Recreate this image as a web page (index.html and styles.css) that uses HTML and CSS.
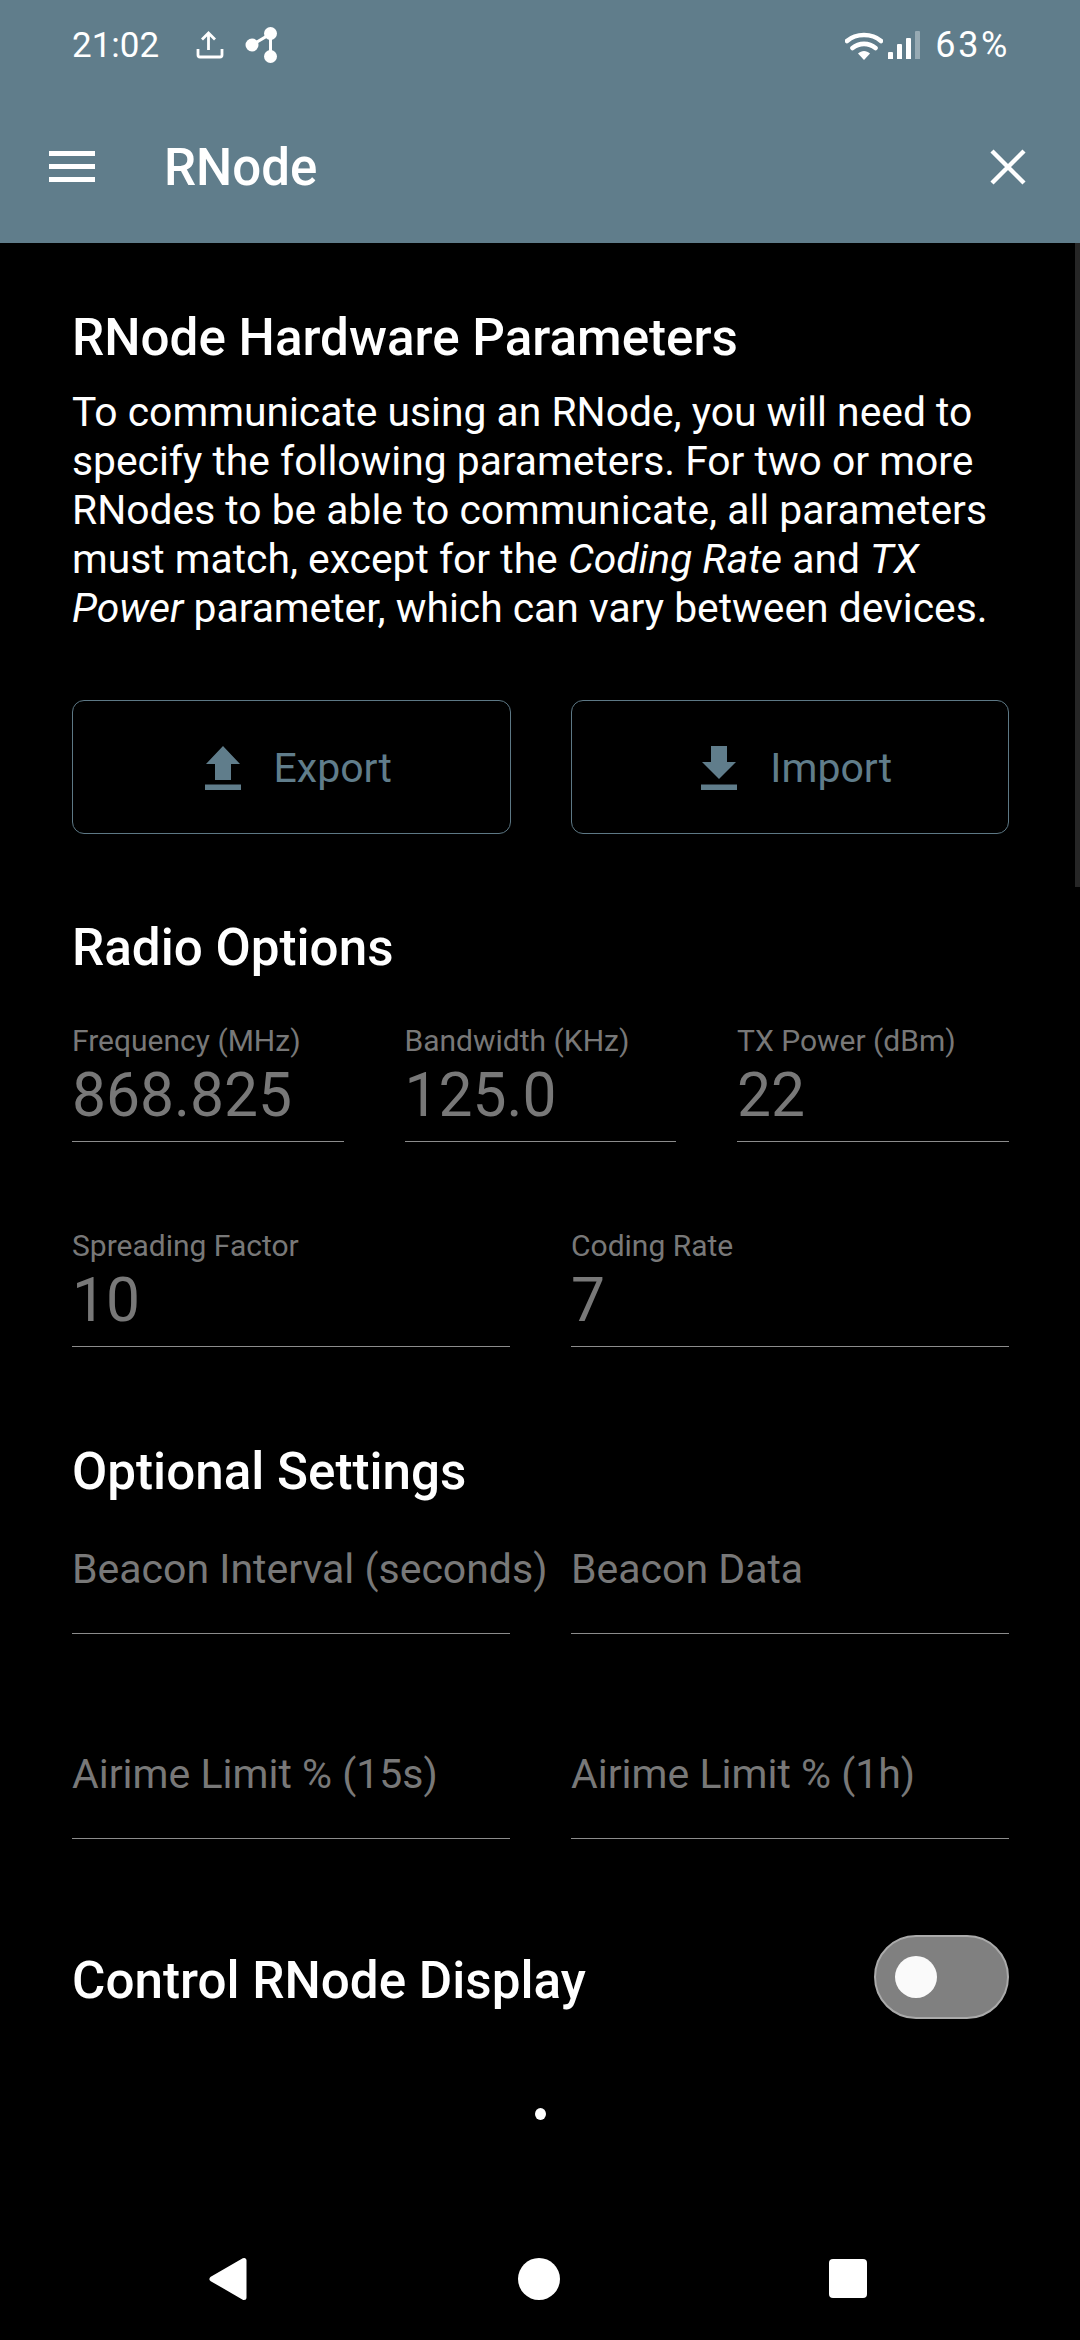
FILE: index.html
```html
<!DOCTYPE html>
<html>
  <head>
    <meta name="viewport" content="width=device-width,initial-scale=1.0">
    <title>RNode</title>
    <link rel="stylesheet" href="styles.css">
  </head>
  <body>
    <header class="app-header">
      <div class="status-bar">
        <span class="clock">21:02</span>
        <svg class="ic-upload" viewBox="0 0 28 28" width="28" height="28"><path d="M12.500 19V3M6 8.500 12.500 2 19 8.500M2 18v6a2 2 0 0 0 2 2h20a2 2 0 0 0 2-2v-6" fill="none" stroke="#fff" stroke-width="2.800"/></svg>
        <svg class="ic-mesh" viewBox="0 0 32 36" width="32" height="36"><path d="M7 18 25.500 7v23" fill="none" stroke="#fff" stroke-width="3"/><circle cx="7" cy="18" r="6.500" fill="#fff"/><circle cx="25.500" cy="6.500" r="6.500" fill="#fff"/><circle cx="25.500" cy="29.500" r="6.500" fill="#fff"/></svg>
        <span class="status-right">
          <svg class="ic-wifi" viewBox="0 0 38 29" width="38" height="29"><path d="M2 10C11 2 27 2 36 10M7.500 17C14 11.500 24 11.500 30.500 17" fill="none" stroke="#fff" stroke-width="4.600" stroke-linecap="round"/><path d="M13 22.500C16.500 19 21.500 19 25 22.500L19 29Z" fill="#fff"/></svg>
          <span class="signal">
            <i class="bar bar-1"></i><i class="bar bar-2"></i><i class="bar bar-3"></i><i class="bar bar-4"></i>
          </span>
          <span class="battery">63%</span>
        </span>
      </div>
      <div class="toolbar">
        <span class="burger"><i></i><i></i><i></i></span>
        <span class="toolbar-title">RNode</span>
        <svg class="ic-close" viewBox="0 0 36 36" width="36" height="36"><path d="M2 2l32 32M34 2 2 34" stroke="#fff" stroke-width="4.400"/></svg>
      </div>
    </header>

    <main class="content">
      <div class="scrollbar"></div>

      <h2 class="first-title">RNode Hardware Parameters</h2>
      <p class="intro">To communicate using an RNode, you will need to specify the following parameters. For two or more RNodes to be able to communicate, all parameters must match, except for the <em>Coding Rate</em> and <em>TX Power</em> parameter, which can vary between devices.</p>

      <div class="btn-row">
        <button class="btn">
          <svg viewBox="0 0 36 44" width="36" height="44"><path d="M18 0 35 18H26V34H10V18H1ZM0 38.500H36V44H0Z" fill="#607d8b"/></svg>
          <span>Export</span>
        </button>
        <button class="btn">
          <svg viewBox="0 0 36 44" width="36" height="44"><path d="M10 0H26V16H35L18 33 1 16H10ZM0 38.500H36V44H0Z" fill="#607d8b"/></svg>
          <span>Import</span>
        </button>
      </div>

      <h2 class="radio-title">Radio Options</h2>
      <div class="fields fields-3">
        <div class="field"><label>Frequency (MHz)</label><div class="value">868.825</div></div>
        <div class="field"><label>Bandwidth (KHz)</label><div class="value">125.0</div></div>
        <div class="field"><label>TX Power (dBm)</label><div class="value">22</div></div>
      </div>
      <div class="fields fields-2">
        <div class="field"><label>Spreading Factor</label><div class="value">10</div></div>
        <div class="field"><label>Coding Rate</label><div class="value">7</div></div>
      </div>

      <h2 class="optional-title">Optional Settings</h2>
      <div class="fields fields-2 beacon-row">
        <div class="field"><div class="hint">Beacon Interval (seconds)</div></div>
        <div class="field"><div class="hint">Beacon Data</div></div>
      </div>
      <div class="fields fields-2">
        <div class="field"><div class="hint">Airime Limit % (15s)</div></div>
        <div class="field"><div class="hint">Airime Limit % (1h)</div></div>
      </div>

      <div class="switch-row">
        <h2>Control RNode Display</h2>
        <span class="switch"><i></i></span>
      </div>

      <div class="dot"></div>
    </main>

    <nav class="nav-bar">
      <svg viewBox="0 0 40 44" width="40" height="44"><path d="M36 3.500V40.500L4 22Z" fill="#fff" stroke="#fff" stroke-width="5" stroke-linejoin="round"/></svg>
      <span class="nav-home"></span>
      <span class="nav-recent"></span>
    </nav>
  </body>
</html>
```

FILE: styles.css
```css
* { box-sizing: border-box; }

html, body { margin: 0; height: 100%; }
body { width: 1080px; height: 2340px; background: #000; color: #fff; font-family: Roboto, sans-serif; overflow: hidden; display: flex; flex-direction: column; }

/* top bar */
.app-header { background: #607d8b; height: 243px; flex: none; }
.status-bar { height: 90px; padding: 0 72px; display: flex; align-items: center; }
.clock { font-size: 35px; width: 124px; }
.ic-mesh { margin-left: 21px; }
.status-right { margin-left: auto; display: flex; align-items: center; }
.signal { display: flex; align-items: flex-end; gap: 3.500px; height: 28px; margin-left: 5px; }
.bar { width: 5.500px; background: #fff; display: block; border-radius: 1px 1px 0 0; }
.bar-1 { height: 7px; }
.bar-2 { height: 15px; }
.bar-3 { height: 21px; }
.bar-4 { height: 28px; opacity: 0.35; }
.battery { font-size: 36px; margin-left: 15px; letter-spacing: 2.600px; margin-right: -2px; }

.toolbar { height: 153px; padding: 0 54px 0 49px; display: flex; align-items: center; }
.burger { width: 46px; display: flex; flex-direction: column; gap: 8px; }
.burger i { display: block; height: 5px; background: #fff; }
.toolbar-title { font-size: 51px; font-weight: 500; margin: 2px 0 0 69px; }
.ic-close { margin-left: auto; }

/* page content */
.content { flex: 1; position: relative; padding: 0 71px 0 72px; }
.scrollbar { position: absolute; top: 0; right: 0; width: 5px; height: 644px; background: #262626; }

h2 { margin: 0; font-size: 51.200px; font-weight: 500; line-height: 60px; }
.first-title { margin-top: 65px; }
.intro { margin: 20px 0 0; font-size: 40.800px; line-height: 49px; }
.intro em { font-style: italic; }

.btn-row { display: flex; gap: 60px; margin-top: 67px; }
.btn { flex: 1; height: 134px; background: transparent; border: 1px solid #5d7885; border-radius: 12px; color: #607d8b; font: 400 41px Roboto, sans-serif; display: flex; align-items: center; justify-content: center; gap: 33px; padding: 2px 0 0 14px; }

.radio-title { margin-top: 84px; }
.optional-title { margin-top: 95px; }

.fields { display: grid; margin-top: 87px; }
.fields-3 { grid-template-columns: repeat(3, 271.500px); gap: 61px; margin-top: 46px; }
.fields-2 { grid-template-columns: repeat(2, 438px); gap: 61px; }
.beacon-row { margin-top: 14px; }
.field { border-bottom: 1px solid #8c8c8c; height: 118px; color: #787878; }
.field label { display: block; font-size: 30px; line-height: 34px; }
.value { font-size: 60.500px; line-height: 66px; margin-top: 5px; }
.hint { font-size: 41px; line-height: 50px; padding-top: 28px; white-space: nowrap; }

.switch-row { display: flex; align-items: center; justify-content: space-between; margin-top: 96px; }
.switch-row h2 { padding-top: 8px; line-height: 60px; }
.switch { width: 135px; height: 84px; border-radius: 42px; background: #808080; border: 2px solid #aaa; display: flex; align-items: center; padding-left: 19px; }
.switch i { width: 42px; height: 42px; border-radius: 50%; background: #fafafa; display: block; }

.dot { width: 11px; height: 12px; margin: 89px auto 0; border-radius: 50%; background: #fff; }

/* system navigation */
.nav-bar { height: 123px; flex: none; display: flex; align-items: center; justify-content: space-between; padding: 0 213px 0 208px; }
.nav-home { width: 42px; height: 42px; border-radius: 50%; background: #fff; }
.nav-recent { width: 38px; height: 39px; border-radius: 4px; background: #fff; }
```
